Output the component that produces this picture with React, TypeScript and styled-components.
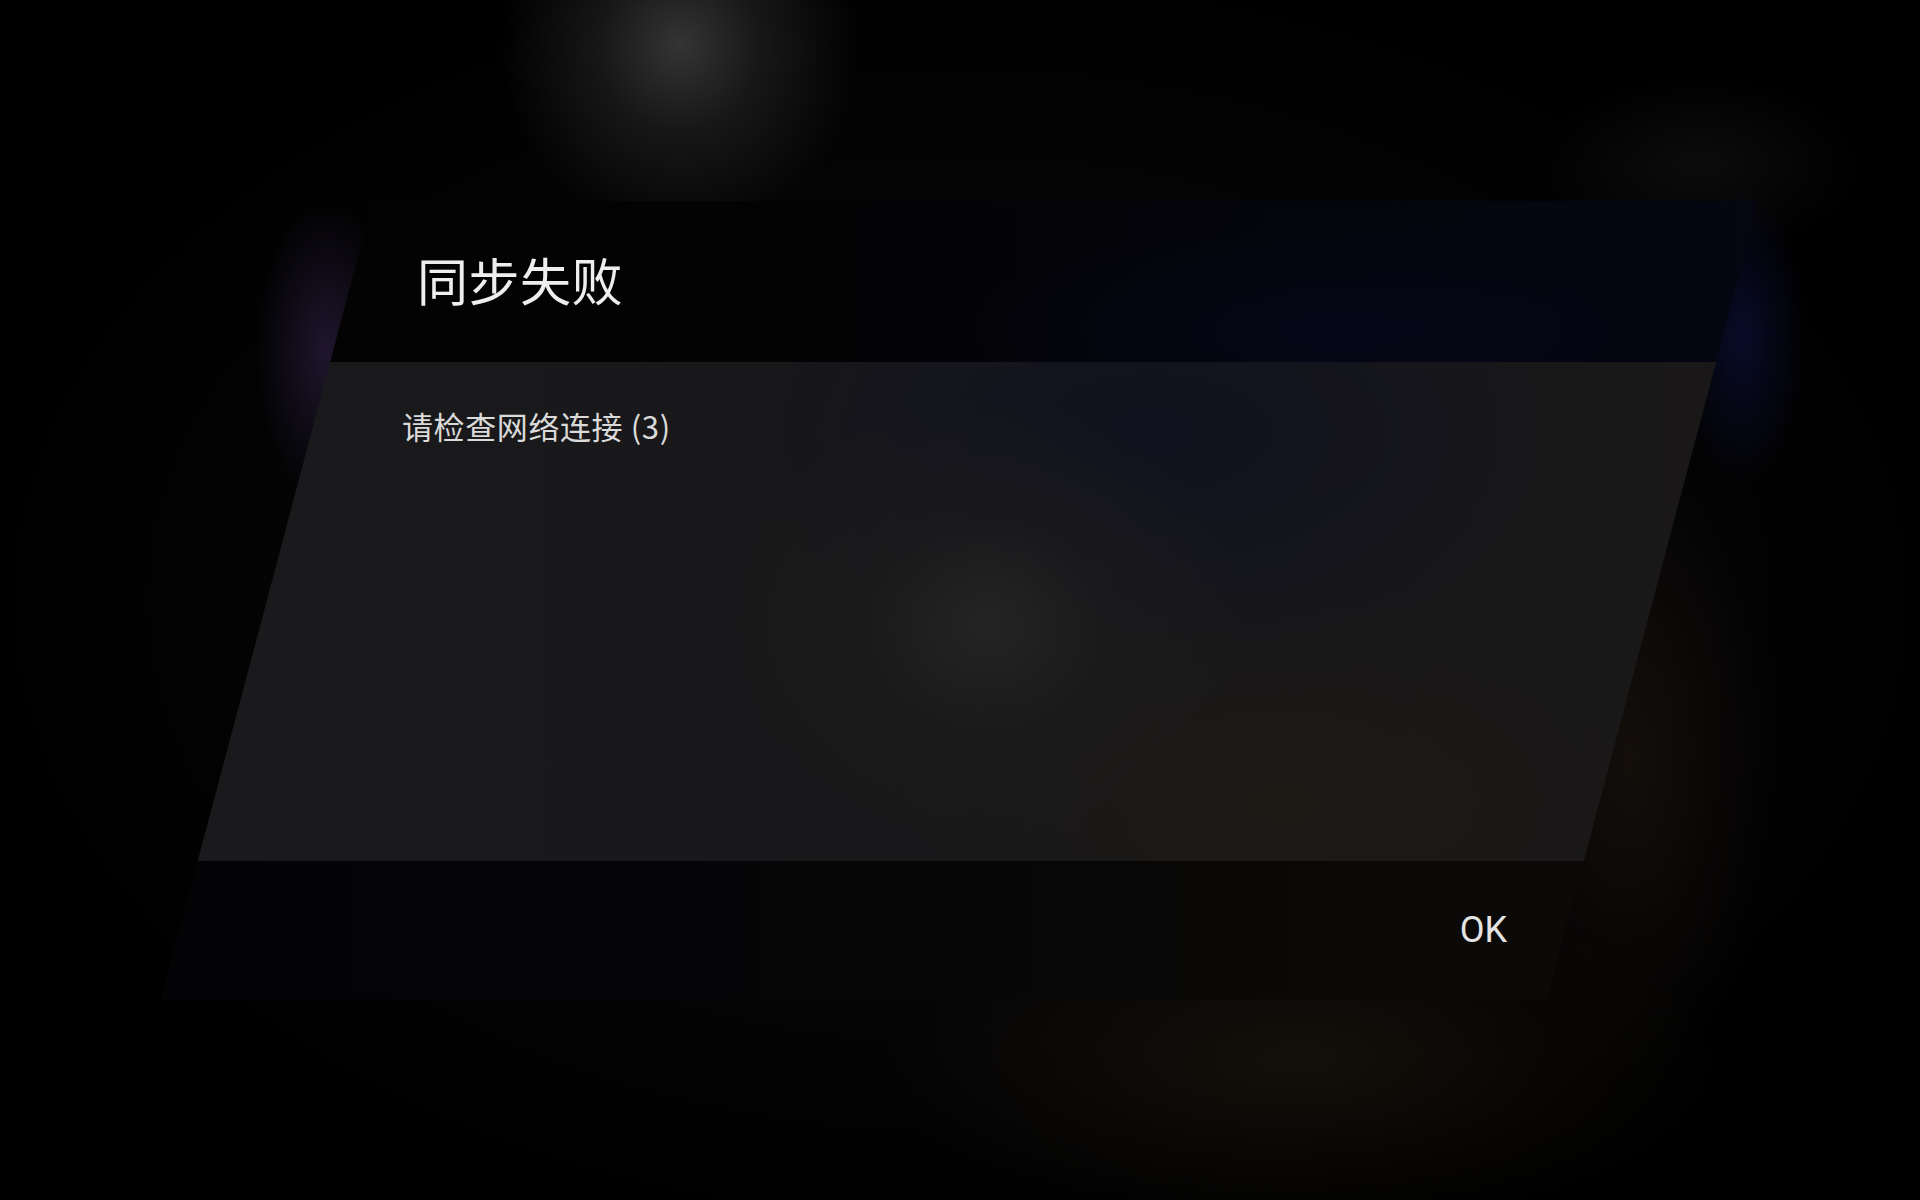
import React from 'react';
import styled, { createGlobalStyle } from 'styled-components';

const GlobalStyle = createGlobalStyle`
  html, body {
    margin: 0;
    padding: 0;
    background: #000;
  }
  * {
    box-sizing: border-box;
  }
`;

const Stage = styled.div`
  width: 100vw;
  height: 100vh;
  overflow: hidden;
  display: flex;
  align-items: center;
  justify-content: center;
  background:
    radial-gradient(ellipse 180px 190px at 680px 45px, rgba(52, 52, 52, 1) 0%, rgba(32, 32, 32, 0.7) 45%, rgba(0, 0, 0, 0) 100%),
    radial-gradient(ellipse 70px 150px at 326px 350px, rgba(58, 40, 86, 0.5) 0%, rgba(0, 0, 0, 0) 100%),
    radial-gradient(ellipse 65px 150px at 1742px 335px, rgba(16, 22, 78, 0.5) 0%, rgba(0, 0, 0, 0) 100%),
    radial-gradient(ellipse 160px 90px at 1700px 165px, rgba(40, 40, 40, 0.3) 0%, rgba(0, 0, 0, 0) 100%),
    radial-gradient(ellipse 420px 170px at 1300px 1060px, rgba(34, 27, 16, 0.55) 0%, rgba(0, 0, 0, 0) 100%),
    radial-gradient(ellipse 150px 320px at 1630px 760px, rgba(30, 22, 15, 0.6) 0%, rgba(0, 0, 0, 0) 100%),
    radial-gradient(ellipse 980px 640px at 960px 600px, rgba(18, 18, 21, 0.9) 0%, rgba(8, 8, 10, 0.6) 60%, rgba(0, 0, 0, 0) 100%),
    #000;
`;

// parallelogram sheet, slanted about 15deg
const Dialog = styled.div`
  width: 1598px;
  height: 799px;
  display: flex;
  flex-direction: column;
  clip-path: polygon(212px 0, 100% 0, calc(100% - 212px) 100%, 0 100%);
`;

const Header = styled.div`
  height: 161px;
  flex: none;
  display: flex;
  align-items: center;
  padding-left: 256px;
  padding-bottom: 4px;
  background:
    radial-gradient(ellipse 380px 110px at 1180px 130px, rgba(6, 6, 26, 0.8) 0%, rgba(0, 0, 0, 0) 100%),
    linear-gradient(90deg, #030304 0%, #030304 40%, #04040a 62%, #05050f 85%, #060612 100%);
`;

const Title = styled.h1`
  margin: 0;
  font-family: 'Noto Sans CJK SC', 'Noto Sans', sans-serif;
  font-size: 51px;
  font-weight: 400;
  color: #eeeeee;
  letter-spacing: 0.5px;
`;

const Body = styled.div`
  height: 499px;
  flex: none;
  padding: 46px 0 0 241px;
  background:
    radial-gradient(ellipse 260px 230px at 826px 262px, rgba(36, 36, 36, 1) 0%, rgba(28, 28, 28, 0.6) 45%, rgba(0, 0, 0, 0) 100%),
    radial-gradient(ellipse 420px 230px at 990px 70px, rgba(17, 17, 32, 0.95) 0%, rgba(0, 0, 0, 0) 100%),
    radial-gradient(ellipse 380px 220px at 1120px 440px, rgba(30, 25, 20, 0.9) 0%, rgba(0, 0, 0, 0) 100%),
    linear-gradient(90deg, #1a1a1c 0%, #18181a 40%, #17171a 70%, #1a1817 100%);
`;

const Message = styled.p`
  margin: 0;
  font-family: 'Noto Sans CJK SC', 'Noto Sans', sans-serif;
  font-size: 31px;
  line-height: 36px;
  font-weight: 400;
  letter-spacing: 0.6px;
  color: #dadada;
`;

const Footer = styled.div`
  height: 139px;
  flex: none;
  display: flex;
  align-items: center;
  justify-content: flex-end;
  padding-right: 252px;
  background: linear-gradient(90deg, #030305 0%, #050507 35%, #090807 65%, #0c0a08 85%, #0a0908 100%);
`;

const OkButton = styled.button`
  border: none;
  background: none;
  padding: 0;
  margin: 0 0 0 0;
  cursor: pointer;
  font-family: Roboto, 'Liberation Sans', sans-serif;
  font-size: 36px;
  line-height: 1;
  font-weight: 400;
  color: #e4e4e4;
`;

export default function App() {
  return (
    <>
      <GlobalStyle />
      <Stage>
        <Dialog>
          <Header>
            <Title>同步失败</Title>
          </Header>
          <Body>
            <Message>请检查网络连接 (3)</Message>
          </Body>
          <Footer>
            <OkButton>OK</OkButton>
          </Footer>
        </Dialog>
      </Stage>
    </>
  );
}
